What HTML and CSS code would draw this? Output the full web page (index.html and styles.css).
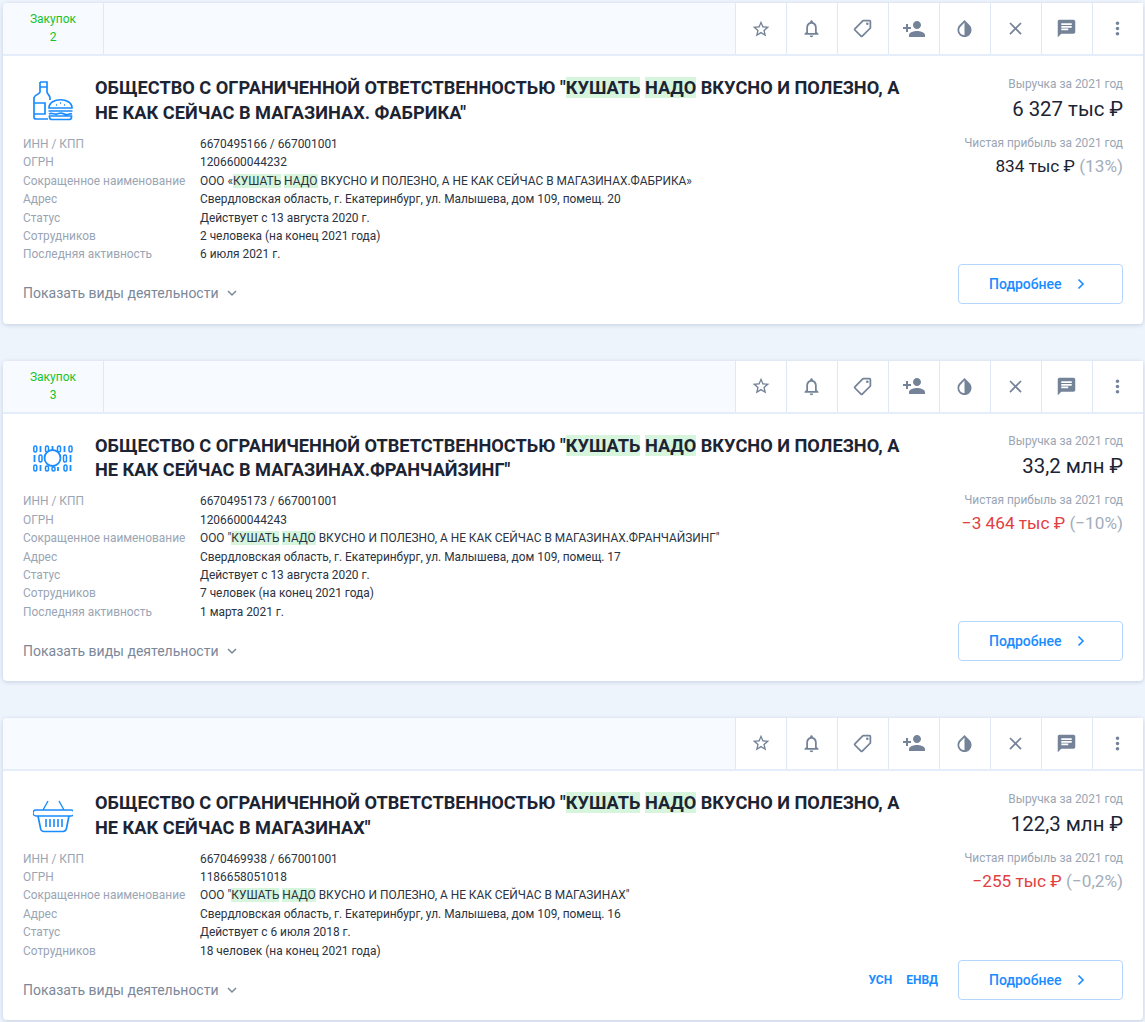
FILE: index.html
```html
<!DOCTYPE html>
<html lang="ru">
<head>
<meta charset="utf-8">
<title>Компании</title>
<link rel="stylesheet" href="styles.css">
</head>
<body>
<svg class="defs" width="0" height="0" aria-hidden="true">
  <symbol id="i-star" viewBox="0 0 24 24"><path d="M22 9.24l-7.19-.62L12 2 9.19 8.63 2 9.24l5.46 4.73L5.82 21 12 17.27 18.18 21l-1.63-7.03L22 9.24zM12 15.4l-3.76 2.27 1-4.28-3.32-2.88 4.38-.38L12 6.1l1.71 4.04 4.38.38-3.32 2.88 1 4.28L12 15.4z"/></symbol>
  <symbol id="i-bell" viewBox="0 0 24 24"><path d="M12 22c1.1 0 2-.9 2-2h-4c0 1.1.9 2 2 2zm6-6v-5c0-3.07-1.63-5.64-4.5-6.32V4c0-.83-.67-1.5-1.5-1.5s-1.5.67-1.5 1.5v.68C7.64 5.36 6 7.92 6 11v5l-2 2v1h16v-1l-2-2zm-2 1H8v-6c0-2.48 1.51-4.5 4-4.5s4 2.02 4 4.5v6z"/></symbol>
  <symbol id="i-tag" viewBox="0 0 24 24"><path d="M21.41 11.58l-9-9A2 2 0 0 0 11 2H4a2 2 0 0 0-2 2v7c0 .55.22 1.05.59 1.42l9 9a2 2 0 0 0 2.82 0l7-7a2 2 0 0 0 0-2.84zM13 20l-9-9V4h7l9 9-7 7z" transform="rotate(90 12 12)"/><circle cx="17.5" cy="6.5" r="1.5"/></symbol>
  <symbol id="i-person" viewBox="0 0 24 24"><path d="M15 12c2.21 0 4-1.79 4-4s-1.79-4-4-4-4 1.79-4 4 1.79 4 4 4zm-9-2V7H4v3H1v2h3v3h2v-3h3v-2H6zm9 4c-2.67 0-8 1.34-8 4v2h16v-2c0-2.66-5.33-4-8-4z"/></symbol>
  <symbol id="i-drop" viewBox="0 0 24 24"><path d="M17.66 8L12 2.35 6.34 8C4.78 9.56 4 11.64 4 13.64s.78 4.11 2.34 5.67 3.61 2.35 5.66 2.35 4.1-.79 5.66-2.35S20 15.64 20 13.64 19.22 9.56 17.66 8zM6 14c.01-2 .62-3.27 1.76-4.4L12 5.27V19.6c-3.4 0-6-2.6-6-5.6z"/></symbol>
  <symbol id="i-close" viewBox="0 0 24 24"><path d="M19 6.41L17.59 5 12 10.59 6.41 5 5 6.41 10.59 12 5 17.59 6.41 19 12 13.41 17.59 19 19 17.59 13.41 12z"/></symbol>
  <symbol id="i-chat" viewBox="0 0 24 24"><path d="M20 2H4c-1.1 0-2 .9-2 2v18l4-4h14c1.1 0 2-.9 2-2V4c0-1.1-.9-2-2-2zM6 9h12v2H6V9zm8 5H6v-2h8v2zm4-6H6V6h12v2z"/></symbol>
  <symbol id="i-more" viewBox="0 0 24 24"><path d="M12 8c1.1 0 2-.9 2-2s-.9-2-2-2-2 .9-2 2 .9 2 2 2zm0 2c-1.1 0-2 .9-2 2s.9 2 2 2 2-.9 2-2-.9-2-2-2zm0 6c-1.1 0-2 .9-2 2s.9 2 2 2 2-.9 2-2-.9-2-2-2z"/></symbol>
  <symbol id="i-down" viewBox="0 0 12 12"><path d="M2 4l4 4 4-4" fill="none" stroke="currentColor" stroke-width="1.5"/></symbol>
  <symbol id="i-right" viewBox="0 0 12 12"><path d="M3.5 1.5L8 6l-4.500 4.500" fill="none" stroke="currentColor" stroke-width="1.600"/></symbol>
</svg>

<main class="list">

<article class="card">
  <header class="bar">
    <div class="purchases"><span>Закупок</span><span>2</span></div>
    <div class="spacer"></div>
    <div class="tool"><svg class="ti star"><use href="#i-star"/></svg></div>
    <div class="tool"><svg class="ti"><use href="#i-bell"/></svg></div>
    <div class="tool"><svg class="ti"><use href="#i-tag"/></svg></div>
    <div class="tool"><svg class="ti wide"><use href="#i-person"/></svg></div>
    <div class="tool"><svg class="ti"><use href="#i-drop"/></svg></div>
    <div class="tool"><svg class="ti"><use href="#i-close"/></svg></div>
    <div class="tool"><svg class="ti"><use href="#i-chat"/></svg></div>
    <div class="tool"><svg class="ti"><use href="#i-more"/></svg></div>
  </header>
  <div class="body">
    <div class="main">
      <div class="head">
        <svg class="logo" viewBox="0 0 40 40" fill="none" stroke="#1a8cff" stroke-width="1.700">
          <path d="M7 1h7v10c0 2 3 3 3 6v2M7 1v10c0 2-6 3-6 6v19a2 2 0 0 0 2 2h12M1 22h11v11H1M7 6h7"/>
          <path d="M16 27c0-11 23-11 23 0zM15.500 30h24M16 33c3-2 5 1 8 0s4-2 7 0 5-1 8 0M16.500 35h22v1a2.500 2.500 0 0 1-2.500 2.500H19a2.500 2.500 0 0 1-2.500-2.500z"/>
          <path d="M23 24h1M31 24h1M27 22h1"/>
        </svg>
        <h2 class="title">ОБЩЕСТВО С ОГРАНИЧЕННОЙ ОТВЕТСТВЕННОСТЬЮ "<mark>КУШАТЬ</mark> <mark>НАДО</mark> ВКУСНО И ПОЛЕЗНО, А НЕ КАК СЕЙЧАС В МАГАЗИНАХ. ФАБРИКА"</h2>
      </div>
      <dl class="facts">
        <dt>ИНН / КПП</dt><dd>6670495166 / 667001001</dd>
        <dt>ОГРН</dt><dd>1206600044232</dd>
        <dt>Сокращенное наименование</dt><dd>ООО «<mark>КУШАТЬ</mark> <mark>НАДО</mark> ВКУСНО И ПОЛЕЗНО, А НЕ КАК СЕЙЧАС В МАГАЗИНАХ.ФАБРИКА»</dd>
        <dt>Адрес</dt><dd>Свердловская область, г. Екатеринбург, ул. Малышева, дом 109, помещ. 20</dd>
        <dt>Статус</dt><dd>Действует с 13 августа 2020 г.</dd>
        <dt>Сотрудников</dt><dd>2 человека (на конец 2021 года)</dd>
        <dt>Последняя активность</dt><dd>6 июля 2021 г.</dd>
      </dl>
      <div class="show">Показать виды деятельности <svg class="chev"><use href="#i-down"/></svg></div>
    </div>
    <aside class="side">
      <div class="metric-label">Выручка за 2021 год</div>
      <div class="revenue">6 327 тыс ₽</div>
      <div class="metric-label second">Чистая прибыль за 2021 год</div>
      <div class="profit">834 тыс ₽ <span class="pct">(13%)</span></div>
      <div class="actions">
        <a class="more">Подробнее <svg class="arrow"><use href="#i-right"/></svg></a>
      </div>
    </aside>
  </div>
</article>

<article class="card">
  <header class="bar">
    <div class="purchases"><span>Закупок</span><span>3</span></div>
    <div class="spacer"></div>
    <div class="tool"><svg class="ti star"><use href="#i-star"/></svg></div>
    <div class="tool"><svg class="ti"><use href="#i-bell"/></svg></div>
    <div class="tool"><svg class="ti"><use href="#i-tag"/></svg></div>
    <div class="tool"><svg class="ti wide"><use href="#i-person"/></svg></div>
    <div class="tool"><svg class="ti"><use href="#i-drop"/></svg></div>
    <div class="tool"><svg class="ti"><use href="#i-close"/></svg></div>
    <div class="tool"><svg class="ti"><use href="#i-chat"/></svg></div>
    <div class="tool"><svg class="ti"><use href="#i-more"/></svg></div>
  </header>
  <div class="body">
    <div class="main">
      <div class="head">
        <svg class="logo" viewBox="0 0 40 40" fill="none" stroke="#1a8cff" stroke-width="1.500">
          <g stroke-width="1.800">
            <path d="M7.500 8v6M19.500 8v6M31.500 8v6M1.500 17v7M37.500 17v7M7.500 27v6M25 29v4M37.500 27v6"/>
          </g>
          <rect x="0.800" y="8" width="3" height="6" rx="1.500"/>
          <rect x="12.500" y="8" width="3" height="6" rx="1.500"/>
          <rect x="24.500" y="8" width="3" height="6" rx="1.500"/>
          <rect x="36" y="8" width="3" height="6" rx="1.500"/>
          <rect x="6" y="17" width="3" height="7" rx="1.500"/>
          <rect x="30.500" y="17" width="3" height="7" rx="1.500"/>
          <rect x="0.800" y="27" width="3" height="6" rx="1.500"/>
          <rect x="12.500" y="28" width="3" height="5" rx="1.500"/>
          <rect x="19" y="29" width="3" height="4" rx="1.500"/>
          <rect x="31" y="27" width="3" height="6" rx="1.500"/>
          <circle cx="19.500" cy="20" r="8" fill="#fff" stroke-width="1.800"/>
        </svg>
        <h2 class="title">ОБЩЕСТВО С ОГРАНИЧЕННОЙ ОТВЕТСТВЕННОСТЬЮ "<mark>КУШАТЬ</mark> <mark>НАДО</mark> ВКУСНО И ПОЛЕЗНО, А НЕ КАК СЕЙЧАС В МАГАЗИНАХ.ФРАНЧАЙЗИНГ"</h2>
      </div>
      <dl class="facts">
        <dt>ИНН / КПП</dt><dd>6670495173 / 667001001</dd>
        <dt>ОГРН</dt><dd>1206600044243</dd>
        <dt>Сокращенное наименование</dt><dd>ООО "<mark>КУШАТЬ</mark> <mark>НАДО</mark> ВКУСНО И ПОЛЕЗНО, А НЕ КАК СЕЙЧАС В МАГАЗИНАХ.ФРАНЧАЙЗИНГ"</dd>
        <dt>Адрес</dt><dd>Свердловская область, г. Екатеринбург, ул. Малышева, дом 109, помещ. 17</dd>
        <dt>Статус</dt><dd>Действует с 13 августа 2020 г.</dd>
        <dt>Сотрудников</dt><dd>7 человек (на конец 2021 года)</dd>
        <dt>Последняя активность</dt><dd>1 марта 2021 г.</dd>
      </dl>
      <div class="show">Показать виды деятельности <svg class="chev"><use href="#i-down"/></svg></div>
    </div>
    <aside class="side">
      <div class="metric-label">Выручка за 2021 год</div>
      <div class="revenue">33,2 млн ₽</div>
      <div class="metric-label second">Чистая прибыль за 2021 год</div>
      <div class="profit"><span class="neg">−3 464 тыс ₽</span> <span class="pct">(−10%)</span></div>
      <div class="actions">
        <a class="more">Подробнее <svg class="arrow"><use href="#i-right"/></svg></a>
      </div>
    </aside>
  </div>
</article>

<article class="card">
  <header class="bar">
    <div class="spacer"></div>
    <div class="tool"><svg class="ti star"><use href="#i-star"/></svg></div>
    <div class="tool"><svg class="ti"><use href="#i-bell"/></svg></div>
    <div class="tool"><svg class="ti"><use href="#i-tag"/></svg></div>
    <div class="tool"><svg class="ti wide"><use href="#i-person"/></svg></div>
    <div class="tool"><svg class="ti"><use href="#i-drop"/></svg></div>
    <div class="tool"><svg class="ti"><use href="#i-close"/></svg></div>
    <div class="tool"><svg class="ti"><use href="#i-chat"/></svg></div>
    <div class="tool"><svg class="ti"><use href="#i-more"/></svg></div>
  </header>
  <div class="body">
    <div class="main">
      <div class="head">
        <svg class="logo" viewBox="0 0 40 40" fill="none" stroke="#1a8cff" stroke-width="1.700">
          <path d="M15 5l-5 9M26 5l5 9M3 14h35a2.700 2.700 0 0 1 0 6H3a2.700 2.700 0 0 1 0-6z" stroke-width="1.400"/>
          <path d="M5 20l2.500 12a3.500 3.500 0 0 0 3.500 3.500h19a3.500 3.500 0 0 0 3.500-3.500L36 20"/>
          <path d="M13 23v8M17 23v8M21 23v8M25 23v8M29 23v8" stroke-width="1.600"/>
        </svg>
        <h2 class="title">ОБЩЕСТВО С ОГРАНИЧЕННОЙ ОТВЕТСТВЕННОСТЬЮ "<mark>КУШАТЬ</mark> <mark>НАДО</mark> ВКУСНО И ПОЛЕЗНО, А НЕ КАК СЕЙЧАС В МАГАЗИНАХ"</h2>
      </div>
      <dl class="facts">
        <dt>ИНН / КПП</dt><dd>6670469938 / 667001001</dd>
        <dt>ОГРН</dt><dd>1186658051018</dd>
        <dt>Сокращенное наименование</dt><dd>ООО "<mark>КУШАТЬ</mark> <mark>НАДО</mark> ВКУСНО И ПОЛЕЗНО, А НЕ КАК СЕЙЧАС В МАГАЗИНАХ"</dd>
        <dt>Адрес</dt><dd>Свердловская область, г. Екатеринбург, ул. Малышева, дом 109, помещ. 16</dd>
        <dt>Статус</dt><dd>Действует с 6 июля 2018 г.</dd>
        <dt>Сотрудников</dt><dd>18 человек (на конец 2021 года)</dd>
      </dl>
      <div class="show">Показать виды деятельности <svg class="chev"><use href="#i-down"/></svg></div>
    </div>
    <aside class="side">
      <div class="metric-label">Выручка за 2021 год</div>
      <div class="revenue">122,3 млн ₽</div>
      <div class="metric-label second">Чистая прибыль за 2021 год</div>
      <div class="profit"><span class="neg">−255 тыс ₽</span> <span class="pct">(−0,2%)</span></div>
      <div class="actions">
        <span class="tax">УСН</span><span class="tax">ЕНВД</span>
        <a class="more">Подробнее <svg class="arrow"><use href="#i-right"/></svg></a>
      </div>
    </aside>
  </div>
</article>

</main>
</body>
</html>
```
FILE: styles.css
```css
* { box-sizing: border-box; }
html, body { margin: 0; padding: 0; height: 1022px; overflow: hidden; }
body {
  background: #eef4fc;
  font-family: Roboto, "Liberation Sans", sans-serif;
  color: #1c2433;
}
.defs { position: absolute; }
.list {
  display: flex;
  flex-direction: column;
  gap: 37px;
  padding: 3.200px 2px 0 3px;
}
.card {
  background: #fff;
  border-radius: 4px;
  box-shadow: 0 1px 4px rgba(60, 90, 140, .25);
  flex: none;
}
.bar {
  display: flex;
  height: 53px;
  background: #f7faff;
  border-bottom: 2px solid #e4edf9;
  border-radius: 4px 4px 0 0;
}
.purchases {
  width: 101px;
  border-right: 1px solid #dfe9f6;
  display: flex;
  flex-direction: column;
  align-items: center;
  padding-top: 7px;
  font-size: 12px;
  line-height: 18px;
  color: #17c22e;
}
.spacer { flex: 1; }
.tool {
  width: 51px;
  background: #fff;
  border-left: 1px solid #dfe9f6;
  padding-right: 1px;
  display: flex;
  align-items: center;
  justify-content: center;
}
.ti { width: 21px; height: 21px; fill: #748398; }
.star { width: 20px; height: 20px; }
.wide { width: 24px; height: 24px; }
.body {
  display: flex;
  padding: 19.800px 20px 20px;
  justify-content: space-between;
}
.main { flex: 1; min-width: 0; padding-bottom: .1px; }
.head { display: flex; align-items: center; height: 50px; }
.logo { width: 40px; height: 40px; flex: none; margin: 0 22px 0 10px; }
.title {
  margin: 0;
  font-size: 18.200px;
  font-weight: 700;
  line-height: 24.500px;
  color: #1c2433;
  flex: none;
  width: 808px;
}
mark {
  background: #d6f5dc;
  color: inherit;
}
.facts {
  display: grid;
  grid-template-columns: 177px 1fr;
  margin: 9px 0 0;
  font-size: 11.900px;
  line-height: 18.400px;
}
.facts dt { color: #9aa5b4; }
.facts dd { margin: 0; color: #2a3342; }
.show {
  margin-top: 19.600px;
  display: flex;
  align-items: center;
  gap: 7px;
  font-size: 14px;
  line-height: 20px;
  color: #7b8899;
}
.chev { width: 12px; height: 12px; color: #7b8899; }
.side {
  width: 220px;
  flex: none;
  display: flex;
  flex-direction: column;
  align-items: flex-end;
  text-align: right;
}
.metric-label { font-size: 11.900px; line-height: 16px; color: #9aa5b4; }
.second { margin-top: 13px; }
.revenue { font-size: 20.400px; line-height: 26px; margin-top: 4px; color: #1c2433; }
.profit { font-size: 17.200px; line-height: 24px; margin-top: 3px; color: #1c2433; }
.pct { color: #a3adbb; }
.neg { color: #e2403f; }
.actions {
  margin-top: auto;
  display: flex;
  align-items: center;
  flex: none;
}
.tax {
  font-size: 12px;
  font-weight: 700;
  color: #1a8cff;
  margin-right: 14px;
}
.tax + .tax { margin-right: 20px; }
.more {
  width: 165px;
  height: 40px;
  border: 1px solid #b5d6fb;
  border-radius: 4px;
  display: flex;
  align-items: center;
  gap: 13px;
  padding-left: 30px;
  font-size: 14px;
  font-weight: 500;
  color: #1a8cff;
  background: #fff;
}
.arrow { width: 12px; height: 12px; color: #1a8cff; }
```
